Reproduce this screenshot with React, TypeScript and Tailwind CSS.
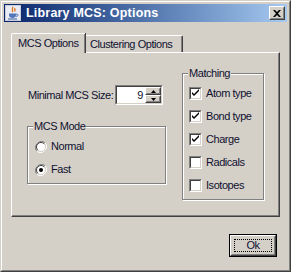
import React from "react";

const font = { fontFamily: '"Liberation Sans", Arial, sans-serif' };

function JavaIcon() {
  return (
    <svg width="16" height="16" viewBox="0 0 16 16">
      <rect x="0.5" y="0.5" width="15" height="15" fill="#e9ecf4" stroke="#c8cbd8" />
      <path d="M8 2 C6 4 9 5 7 7 M10 3 C9 4.5 11 5 9.5 6.5" stroke="#e2741a" strokeWidth="1.3" fill="none" />
      <path d="M4 8.5 h7 v1.5 c0 2 -1.5 3 -3.5 3 s-3.5 -1 -3.5 -3 z" fill="#5374b8" />
      <path d="M11 9.2 h1.3 c1 0 1 2 0 2 h-1.5" stroke="#5374b8" strokeWidth="1" fill="none" />
      <rect x="3" y="13.5" width="9" height="1" fill="#3c5a9c" />
    </svg>
  );
}

function Raised({ className = "", children }: { className?: string; children?: React.ReactNode }) {
  return (
    <div className={"border border-t-white border-l-white border-r-[#404040] border-b-[#404040] " + className}>
      <div className="w-full h-full border border-t-[#d4d0c8] border-l-[#d4d0c8] border-r-[#808080] border-b-[#808080] flex items-center justify-center">
        {children}
      </div>
    </div>
  );
}

function CheckBox({ checked, label }: { checked: boolean; label: string }) {
  return (
    <div className="h-[23px] flex items-center gap-[4px]">
      <div className="w-[13px] h-[13px] border border-t-[#808080] border-l-[#808080] border-r-white border-b-white">
        <div className="w-full h-full bg-white border border-t-[#404040] border-l-[#404040] border-r-[#d4d0c8] border-b-[#d4d0c8]">
          {checked && (
            <svg width="9" height="9" viewBox="0 0 9 9" className="block">
              <path d="M1 3 L1 5 L3 7 L8 2 L8 0 L3 5 Z" fill="#000" />
            </svg>
          )}
        </div>
      </div>
      <span className="whitespace-nowrap">{label}</span>
    </div>
  );
}

function Radio({ checked, label }: { checked: boolean; label: string }) {
  return (
    <div className="h-[23px] flex items-center gap-[4px]">
      <svg width="12" height="12" viewBox="0 0 12 12">
        <path d="M10.2 1.8 A6 6 0 0 0 1.8 10.2" stroke="#808080" strokeWidth="1" fill="none" />
        <path d="M1.8 10.2 A6 6 0 0 0 10.2 1.8" stroke="#ffffff" strokeWidth="1" fill="none" />
        <circle cx="6" cy="6" r="4.5" fill="#ffffff" />
        <path d="M9.2 2.8 A4.5 4.5 0 0 0 2.8 9.2" stroke="#404040" strokeWidth="1" fill="none" />
        <path d="M2.8 9.2 A4.5 4.5 0 0 0 9.2 2.8" stroke="#d4d0c8" strokeWidth="1" fill="none" />
        {checked && <circle cx="6" cy="6" r="2" fill="#000" />}
      </svg>
      <span>{label}</span>
    </div>
  );
}

function Group({ title, className = "", children }: { title: string; className?: string; children?: React.ReactNode }) {
  return (
    <div className={"relative border border-[#808080] shadow-[inset_1px_1px_0_#fff,1px_1px_0_#fff] " + className}>
      <span className="absolute left-[5px] top-[-8px] px-[1px] bg-[#d4d0c8] leading-[14px] whitespace-nowrap">{title}</span>
      {children}
    </div>
  );
}

export default function App() {
  return (
    <div style={font} className="w-[291px] h-[272px] bg-[#d4d0c8] text-[11px] tracking-[-0.45px] text-[#101030] border border-t-[#d4d0c8] border-l-[#d4d0c8] border-r-[#404040] border-b-[#404040]">
      <div className="h-full border border-t-white border-l-white border-r-[#808080] border-b-[#808080] p-[2px] flex flex-col">
        <div className="h-[18px] flex items-center bg-gradient-to-r from-[#0a246a] to-[#a6caf0]">
          <div className="ml-[1px]">
            <JavaIcon />
          </div>
          <span className="ml-[5px] text-white font-bold text-[12.5px] tracking-[0.2px]">Library MCS: Options</span>
          <Raised className="ml-auto mr-[2px] w-[16px] h-[14px] bg-[#d4d0c8]">
            <svg width="8" height="7" viewBox="0 0 8 7">
              <path d="M0 0 h2 l2 2 l2 -2 h2 l-3 3.5 l3 3.5 h-2 l-2 -2 l-2 2 h-2 l3 -3.5 z" fill="#000" />
            </svg>
          </Raised>
        </div>

        <div className="flex-1 pt-[11px] px-[7px] flex flex-col">
          <div className="flex items-end h-[19px]">
            <div className="relative z-10 h-[20px] w-[74px] -mb-px bg-[#d4d0c8] border-l border-t border-white rounded-tl-[2px] shadow-[inset_-1px_0_0_#808080,1px_0_0_#404040] flex items-center pl-[6px] whitespace-nowrap">
              MCS Options
            </div>
            <div className="h-[17px] w-[98px] border-t border-white border-r border-r-[#404040] rounded-tr-[2px] shadow-[inset_-1px_0_0_#808080] flex items-center pl-[5px] whitespace-nowrap">
              Clustering Options
            </div>
          </div>
          <div className="h-[165px] border border-t-white border-l-white border-r-[#404040] border-b-[#404040]">
            <div className="h-full border-r border-b border-r-[#808080] border-b-[#808080] flex items-start pl-[15px]">
              <div className="pt-[32px] w-[139px] shrink-0">
                <div className="h-[20px] flex items-center pl-[1px]">
                  <span className="w-[87px] shrink-0 whitespace-nowrap">Minimal MCS Size:</span>
                  <div className="w-[48px] h-[20px] shrink-0 border border-t-[#808080] border-l-[#808080] border-r-white border-b-white">
                    <div className="h-full border border-t-[#404040] border-l-[#404040] border-r-[#d4d0c8] border-b-[#d4d0c8] flex">
                      <div className="flex-1 bg-white flex items-center justify-end pr-[2px]">9</div>
                      <div className="w-[16px] flex flex-col">
                        <Raised className="h-[8px] w-full bg-[#d4d0c8]">
                          <svg width="5" height="3" viewBox="0 0 5 3"><path d="M2.5 0 L5 3 L0 3 Z" fill="#000" /></svg>
                        </Raised>
                        <Raised className="h-[8px] w-full bg-[#d4d0c8]">
                          <svg width="5" height="3" viewBox="0 0 5 3"><path d="M0 0 L5 0 L2.5 3 Z" fill="#000" /></svg>
                        </Raised>
                      </div>
                    </div>
                  </div>
                </div>
                <Group title="MCS Mode" className="mt-[21px] h-[58px] pt-[8px] pl-[7px]">
                  <Radio checked={false} label="Normal" />
                  <Radio checked={true} label="Fast" />
                </Group>
              </div>
              <div className="pt-[20px] ml-[16px]">
                <Group title="Matching" className="w-[82px] h-[127px] pt-[8px] pl-[6px]">
                  <CheckBox checked={true} label="Atom type" />
                  <CheckBox checked={true} label="Bond type" />
                  <CheckBox checked={true} label="Charge" />
                  <CheckBox checked={false} label="Radicals" />
                  <CheckBox checked={false} label="Isotopes" />
                </Group>
              </div>
            </div>
          </div>
          <div className="flex justify-end mt-[17px] pr-[3px]">
            <div className="border border-black">
              <Raised className="w-[46px] h-[21px] bg-[#d4d0c8]">
                <div className="border border-dotted border-black w-[38px] h-[13px] flex items-center justify-center">Ok</div>
              </Raised>
            </div>
          </div>
        </div>
      </div>
    </div>
  );
}
